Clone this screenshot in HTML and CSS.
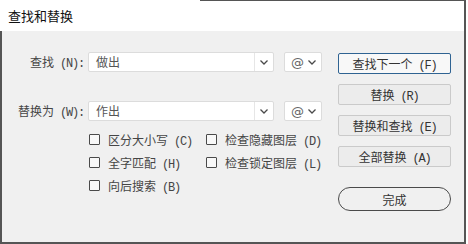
FILE: index.html
```html
<!DOCTYPE html>
<html lang="zh-CN">
<head>
  <meta charset="UTF-8" />
  <title>查找和替换</title>
  <link rel="stylesheet" href="styles.css">
</head>
<body>
  <div class="dialog">
    <div class="titlebar">查找和替换</div>

    <div class="content">
      <div class="main">
        <div class="field-row first">
          <label class="field-label">查找<span class="key"> (N):</span></label>
          <div class="combo text-combo">
            <span class="value">做出</span>
            <span class="drop"><svg width="8" height="5" viewBox="0 0 8 5"><polyline points="0.5,0.5 4,4 7.5,0.5" /></svg></span>
          </div>
          <div class="combo at-combo">
            <span class="at">@</span>
            <svg width="8" height="5" viewBox="0 0 8 5"><polyline points="0.5,0.5 4,4 7.5,0.5" /></svg>
          </div>
        </div>

        <div class="field-row second">
          <label class="field-label">替换为<span class="key"> (W):</span></label>
          <div class="combo text-combo">
            <span class="value">作出</span>
            <span class="drop"><svg width="8" height="5" viewBox="0 0 8 5"><polyline points="0.5,0.5 4,4 7.5,0.5" /></svg></span>
          </div>
          <div class="combo at-combo">
            <span class="at">@</span>
            <svg width="8" height="5" viewBox="0 0 8 5"><polyline points="0.5,0.5 4,4 7.5,0.5" /></svg>
          </div>
        </div>

        <div class="options">
          <label class="option"><span class="box"></span><span>区分大小写<span class="key"> (C)</span></span></label>
          <label class="option"><span class="box"></span><span>检查隐藏图层<span class="key"> (D)</span></span></label>
          <label class="option"><span class="box"></span><span>全字匹配<span class="key"> (H)</span></span></label>
          <label class="option"><span class="box"></span><span>检查锁定图层<span class="key"> (L)</span></span></label>
          <label class="option"><span class="box"></span><span>向后搜索<span class="key"> (B)</span></span></label>
        </div>
      </div>

      <div class="actions">
        <button class="btn default">查找下一个<span class="key"> (F)</span></button>
        <button class="btn">替换<span class="key"> (R)</span></button>
        <button class="btn">替换和查找<span class="key"> (E)</span></button>
        <button class="btn">全部替换<span class="key"> (A)</span></button>
        <button class="btn done">完成</button>
      </div>
    </div>
  </div>
</body>
</html>
```

FILE: styles.css
```css
html, body {
  margin: 0;
  background: #fff;
}
body {
  font-family: "Noto Sans CJK SC", sans-serif;
  font-size: 12px;
  color: #454545;
}
/* latin part of the labels, narrow like a half-width font */
.key {
  font-family: "Liberation Mono", monospace;
  font-size: 12px;
  letter-spacing: -1.2px;
}
.dialog {
  position: relative;
  width: 464px;
  height: 242px;
  border-right: 2px solid #555;
  border-bottom: 2px solid #555;
}
.dialog::before {
  content: "";
  position: absolute;
  top: 0;
  left: 200px;
  right: -2px;
  height: 1px;
  background: #555;
}
.titlebar {
  height: 31px;
  line-height: 31px;
  padding-left: 8px;
  font-size: 13px;
  color: #111;
  background: #fff;
}
.content {
  display: flex;
  height: 211px;
  background: #f0f0f0;
  border-left: 2px solid #555;
}
.main {
  flex: 0 0 336px;
}
.field-row {
  display: flex;
  align-items: center;
  height: 20px;
}
.field-row.first {
  margin-top: 21px;
}
.field-row.second {
  margin-top: 29px;
}
.field-label {
  width: 82px;
  padding-right: 4px;
  text-align: right;
  white-space: nowrap;
}
.combo {
  display: flex;
  align-items: center;
  height: 18px;
  background: #fff;
  border: 1px solid #dcdcdc;
  border-radius: 2px;
}
.combo svg polyline {
  fill: none;
  stroke: #4a4a4a;
  stroke-width: 1.3;
}
.text-combo {
  width: 184px;
}
.text-combo .value {
  flex: 1;
  padding-left: 7px;
  color: #555;
  line-height: 18px;
}
.text-combo .drop {
  display: flex;
  align-items: center;
  justify-content: center;
  width: 18px;
  height: 18px;
  border-left: 1px solid #e6e6e6;
}
.at-combo {
  box-sizing: border-box;
  width: 38px;
  height: 20px;
  margin-left: 10px;
  padding: 0 5px 0 6px;
  justify-content: space-between;
}
.at {
  font-family: "DejaVu Sans", sans-serif;
  font-size: 13px;
  color: #666;
}
.options {
  display: grid;
  grid-template-columns: 117px 130px;
  grid-auto-rows: 23px;
  margin: 7px 0 0 86px;
}
.option {
  display: flex;
  align-items: center;
  white-space: nowrap;
}
.box {
  width: 9px;
  height: 9px;
  margin: 0 8px 0 1px;
  border: 1px solid #4a4a4a;
  border-radius: 1px;
  background: #f8f8f8;
}
.actions {
  display: flex;
  flex-direction: column;
  width: 113px;
  padding-top: 22px;
}
.btn {
  height: 21px;
  margin-bottom: 10px;
  padding: 0;
  font-family: inherit;
  font-size: 12px;
  color: #333;
  background: #ececec;
  border: 1px solid #cacaca;
  border-radius: 2px;
}
.btn.default {
  background: #f8f8f8;
  border-color: #2f6392;
}
.btn.done {
  height: 24px;
  margin-top: 10px;
  background: #f0f0f0;
  border: 1px solid #4a4a4a;
  border-radius: 12px;
}
```
